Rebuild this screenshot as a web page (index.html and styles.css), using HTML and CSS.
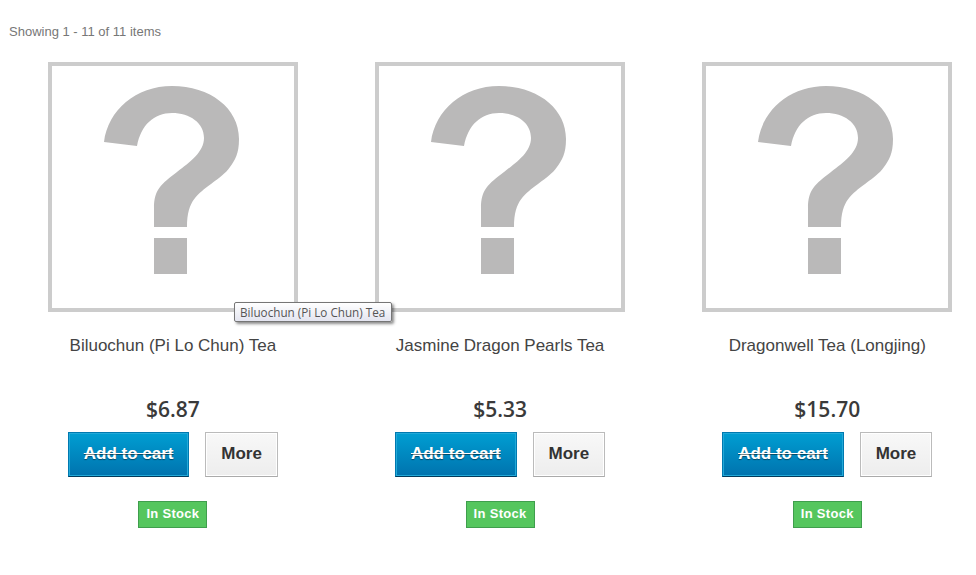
FILE: index.html
```html
<!DOCTYPE html>
<html lang="en">
  <head>
    <meta charset="UTF-8" />
    <title>Tea Products</title>
    <link rel="stylesheet" href="styles.css">
  </head>
  <body>
    <svg class="defs" width="0" height="0">
      <symbol id="no-image" viewBox="0 0 250 250">
        <path d="M56 80C60 48 88 24 124 24C162 24 191 46 191 77C191 92 187 98 182 105C177 112 172 115 163 122C150 132 139 138 139 165L106 165L106 146C106 128 113 122 129 110C142 100 156 90 156 76C156 61 142 51 124 51C106 51 93 63 89 84Z" />
        <rect x="106" y="176" width="33" height="36" />
      </symbol>
    </svg>

    <p class="count">Showing 1 - 11 of 11 items</p>

    <div class="products">
      <div class="product">
        <div class="thumb"><svg class="thumb-icon"><use href="#no-image" /></svg></div>
        <div class="tooltip">Biluochun (Pi Lo Chun) Tea</div>
        <h3 class="name">Biluochun (Pi Lo Chun) Tea</h3>
        <div class="price">$6.87</div>
        <div class="actions">
          <a class="btn btn-cart">Add to cart</a>
          <a class="btn btn-more">More</a>
        </div>
        <span class="stock">In Stock</span>
      </div>

      <div class="product">
        <div class="thumb"><svg class="thumb-icon"><use href="#no-image" /></svg></div>
        <h3 class="name">Jasmine Dragon Pearls Tea</h3>
        <div class="price">$5.33</div>
        <div class="actions">
          <a class="btn btn-cart">Add to cart</a>
          <a class="btn btn-more">More</a>
        </div>
        <span class="stock">In Stock</span>
      </div>

      <div class="product">
        <div class="thumb"><svg class="thumb-icon"><use href="#no-image" /></svg></div>
        <h3 class="name">Dragonwell Tea (Longjing)</h3>
        <div class="price">$15.70</div>
        <div class="actions">
          <a class="btn btn-cart">Add to cart</a>
          <a class="btn btn-more">More</a>
        </div>
        <span class="stock">In Stock</span>
      </div>
    </div>
  </body>
</html>
```

FILE: styles.css
```css
body {
  margin: 0;
  padding: 24px 0 0;
  font-family: "Liberation Sans", Arial, sans-serif;
  background-color: #fff;
  color: #444;
}
.defs {
  position: absolute;
}
.count {
  margin: 0 0 23px 9px;
  height: 15px;
  line-height: 15px;
  font-size: 13px;
  color: #777;
}
.products {
  display: grid;
  grid-template-columns: repeat(3, 327.2px);
  padding-left: 9.3px;
}
.product {
  position: relative;
  display: flex;
  flex-direction: column;
  align-items: center;
}
.product:first-child {
  z-index: 1;
}
.thumb {
  box-sizing: border-box;
  width: 250px;
  height: 250px;
  border: 4px solid #ccc;
  background-color: #fff;
}
.thumb-icon {
  display: block;
  width: 250px;
  height: 250px;
  margin: -4px;
  fill: #bab9b9;
  filter: blur(0.6px);
}
.tooltip {
  position: absolute;
  left: 224.7px;
  top: 240px;
  box-sizing: border-box;
  width: 158px;
  height: 20px;
  line-height: 18px;
  padding-left: 5px;
  font-family: "Open Sans", sans-serif;
  font-size: 11.7px;
  white-space: nowrap;
  color: #555;
  border: 1px solid #767676;
  border-radius: 2px;
  background: linear-gradient(#fff, #e4e5f0);
  box-shadow: 2px 2px 3px rgba(0, 0, 0, 0.45);
}
.name {
  margin: 24px 0 0;
  height: 60px;
  line-height: 19px;
  font-size: 17px;
  font-weight: normal;
  color: #444;
}
.price {
  height: 28px;
  line-height: 26px;
  font-family: "Open Sans", sans-serif;
  font-size: 21px;
  font-weight: 600;
  color: #3a3a3a;
}
.actions {
  display: flex;
  gap: 16px;
  margin-top: 8px;
}
.btn {
  box-sizing: border-box;
  height: 45px;
  line-height: 42px;
  text-align: center;
  font-size: 17px;
  font-weight: bold;
}
.btn-cart {
  width: 121.5px;
  color: #fff;
  text-decoration: line-through;
  text-shadow: 0 1px 1px rgba(0, 0, 0, 0.45);
  border: 1px solid #0079b0;
  border-bottom-color: #003a5c;
  box-shadow: inset 0 0 0 1px #22a9d8;
  background: linear-gradient(#009ed2, #0073ae);
}
.btn-more {
  width: 72.5px;
  color: #333;
  border: 1px solid #bbb;
  border-bottom-color: #aaa;
  box-shadow: inset 0 0 0 1px #fff;
  background: linear-gradient(#f8f8f8, #ededed);
}
.stock {
  box-sizing: border-box;
  width: 69px;
  height: 27px;
  line-height: 23px;
  margin-top: 24px;
  text-align: center;
  font-size: 13px;
  font-weight: bold;
  letter-spacing: 0.3px;
  color: #fff;
  border: 1px solid #3f9e4d;
  background-color: #55c65e;
}
```
